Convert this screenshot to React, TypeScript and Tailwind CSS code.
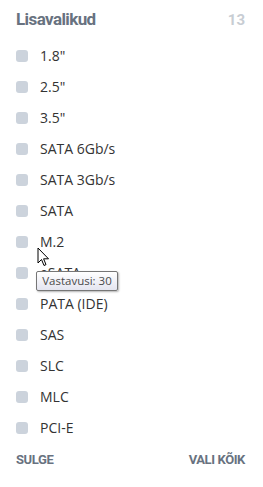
import React from 'react';

const items = ['1.8"', '2.5"', '3.5"', 'SATA 6Gb/s', 'SATA 3Gb/s', 'SATA', 'M.2', 'eSATA', 'PATA (IDE)', 'SAS', 'SLC', 'MLC', 'PCI-E'];

const Cursor = () => (
  <svg width="13" height="20" viewBox="0 0 13 20" className="absolute left-[37px] top-[247px]">
    <path d="M1 1 L1 16 L4.5 12.5 L7 18.5 L9 17.6 L6.6 11.8 L11.5 11.8 Z" fill="#fff" stroke="#000" strokeWidth="1" strokeLinejoin="round" />
  </svg>
);

export default function App() {
  return (
    <div className="relative w-[263px] h-[487px] bg-white pl-4 pr-[18px] font-['Open_Sans',sans-serif]">
      {/* header */}
      <div className="flex h-[40px] items-center justify-between">
        <span className="font-['Roboto',sans-serif] text-[17px] font-bold tracking-[-0.6px] text-[#687280]">Lisavalikud</span>
        <span className="font-['Roboto',sans-serif] text-[15px] font-bold text-[#c8cdd3]">13</span>
      </div>

      {/* options */}
      <div className="flex flex-col">
        {items.map((item) => (
          <label key={item} className="flex h-[31px] items-center gap-3">
            <span className="h-3 w-3 rounded-[3px] bg-[#ccd3dc]"></span>
            <span className="text-[14px] text-[#333]">{item}</span>
          </label>
        ))}
      </div>

      {/* footer */}
      <div className="flex h-[34px] items-center justify-between font-['Roboto',sans-serif] text-[13px] font-bold tracking-[-0.4px] text-[#687280]">
        <span>SULGE</span>
        <span>VALI KÕIK</span>
      </div>

      <Cursor />
      <div className="absolute left-[36px] top-[271px] flex h-[20px] w-[82px] items-center justify-center rounded-[2px] border border-[#767676] bg-gradient-to-b from-white to-[#e4e5f0] text-[11.5px] text-[#4a4a4a] shadow-[1px_1px_2px_rgba(0,0,0,0.3)]">
        Vastavusi: 30
      </div>
    </div>
  );
}
